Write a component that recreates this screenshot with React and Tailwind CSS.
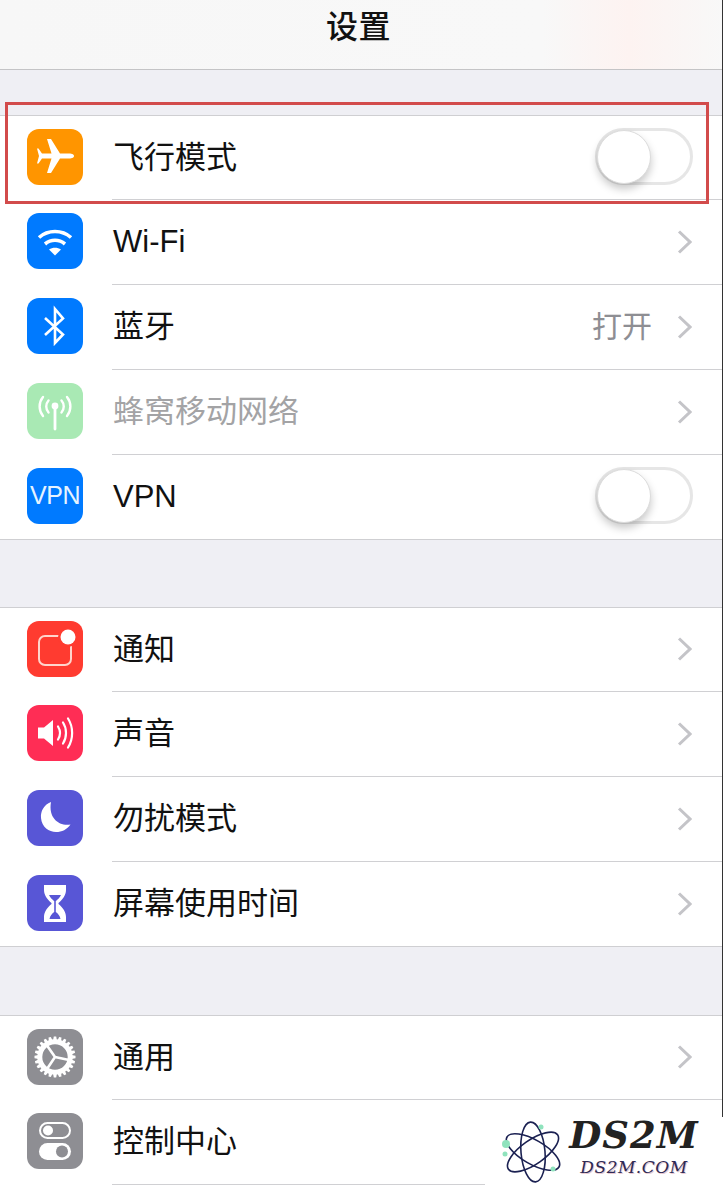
import React from 'react';

const PlaneIcon = () => (
  <svg viewBox="0 0 56 56" className="w-full h-full">
    <path fill="#fff" d="M47 27C47 25 44 24.5 41 24.5L33 24.5 24 10 20 10 24.5 24.5 15 24.5 11.5 19.5 10 19.5 12 27 10 34.5 11.5 34.5 15 29.5 24.5 29.5 20 44 24 44 33 29.5 41 29.5C44 29.5 47 29 47 27Z" />
  </svg>
);

const WifiIcon = () => (
  <svg viewBox="0 0 56 56" className="w-full h-full" fill="none" stroke="#fff" strokeWidth="3.6">
    <path d="M12 24.5C21 16.5 35 16.5 44 24.5" />
    <path d="M18 31C24 26 32 26 38 31" />
    <path fill="#fff" stroke="none" d="M22 36.5C25.5 34 30.5 34 34 36.5L28 42.5Z" />
  </svg>
);

const BluetoothIcon = () => (
  <svg viewBox="0 0 56 56" className="w-full h-full" fill="none" stroke="#fff" strokeWidth="2.6">
    <path d="M18 20L36 36.5 28 45V11L36 20.5 18 37" />
  </svg>
);

const CellularIcon = () => (
  <svg viewBox="0 0 56 56" className="w-full h-full" fill="none" stroke="#fff" strokeWidth="2.4" strokeLinecap="round">
    <circle cx="28" cy="23" r="3.4" fill="#fff" stroke="none" />
    <path d="M28 25V46" strokeWidth="2.8" />
    <path d="M21.5 17.5C18.5 21 18.5 26 21.5 29.5" />
    <path d="M34.5 17.5C37.5 21 37.5 26 34.5 29.5" />
    <path d="M16 14C11.5 19.5 11.5 27.5 16 33" />
    <path d="M40 14C44.5 19.5 44.5 27.5 40 33" />
  </svg>
);

const BellIcon = () => (
  <svg viewBox="0 0 56 56" className="w-full h-full" fill="none">
    <rect x="12" y="15" width="32" height="29" rx="6" stroke="#ffd5cc" strokeWidth="2" />
    <circle cx="41" cy="16" r="10" fill="#ff3b30" />
    <circle cx="41" cy="16" r="7.5" fill="#fff" />
  </svg>
);

const SoundIcon = () => (
  <svg viewBox="0 0 56 56" className="w-full h-full" fill="none" stroke="#fff" strokeWidth="2.2" strokeLinecap="round">
    <path fill="#fff" stroke="none" d="M11 22.5H17L26 15V41L17 33.5H11Z" />
    <path d="M31 21.5C33.5 25.5 33.5 30.5 31 34.5" />
    <path d="M36 17.5C40 23.5 40 32.5 36 38.5" />
    <path d="M41 13.5C46.5 22 46.5 34 41 42.5" />
  </svg>
);

const MoonIcon = () => (
  <svg viewBox="0 0 56 56" className="w-full h-full">
    <path fill="#fff" d="M24 12C16.5 15 13.5 21.5 14 28C14.8 37 22 42 29 42C35 42 40 39.5 43.5 34.5C33 36.5 21 29 24 12Z" />
  </svg>
);

const HourglassIcon = () => (
  <svg viewBox="0 0 56 56" className="w-full h-full">
    <path fill="#fff" d="M17 10H39V15C39 20.5 35.5 24.5 31.5 28V29C35.5 32.5 39 36.5 39 42V47H17V42C17 36.5 20.5 32.5 24.5 29V28C20.5 24.5 17 20.5 17 15Z" />
    <path fill="#5856d6" d="M22 20H34C33 22.5 30.5 24.5 29 26H27C25.5 24.5 23 22.5 22 20Z" />
    <path fill="#5856d6" d="M27.2 26H28.8V37C31 38.5 33 41 33.5 44H22.5C23 41 25 38.5 27.2 37Z" />
  </svg>
);

const teeth = Array.from({ length: 24 }, (_, i) => i * 15);

const GearIcon = () => (
  <svg viewBox="0 0 56 56" className="w-full h-full" fill="none" stroke="#fff">
    {teeth.map(a => (
      <path key={a} d="M25.8 13L26.8 7.5H29.2L30.2 13Z" fill="#fff" stroke="none" transform={`rotate(${a} 28 28)`} />
    ))}
    <circle cx="28" cy="28" r="15.2" strokeWidth="5" />
    <path d="M28 28L20 16.5M28 28L42 31M28 28L20 40" strokeWidth="2.6" />
  </svg>
);

const ControlsIcon = () => (
  <svg viewBox="0 0 56 56" className="w-full h-full" fill="none">
    <rect x="13" y="10" width="30" height="15" rx="7.5" stroke="#fff" strokeWidth="2" />
    <circle cx="21" cy="17.5" r="5" fill="#fff" />
    <rect x="12" y="30" width="32" height="17" rx="8.5" fill="#fff" />
    <circle cx="35" cy="38.5" r="6" fill="#8e8e93" />
  </svg>
);

const Chevron = () => (
  <svg viewBox="0 0 15 24" className="w-[15px] h-[24px] mb-px" fill="none" stroke="#c4c4c8" strokeWidth="3">
    <path d="M2 1.5L13 12 2 22.5" />
  </svg>
);

const Toggle = () => (
  <div className="relative w-[98px] h-[57px] mr-[-1px] mb-[3px] rounded-full border-[3px] border-[#e6e6e6] bg-white">
    <div className="absolute left-[-1px] top-0 w-[54px] h-[54px] -mt-px rounded-full bg-white border border-[#dcdcdc] shadow-[0_5px_8px_rgba(0,0,0,0.22)]" />
  </div>
);

const Row = ({ icon, bg, label, value, toggle, dim, last, first }) => (
  <div className={`flex items-center pl-[27px] ${first || last ? 'h-[84px]' : 'h-[85px]'}`}>
    <div className={`w-[56px] h-[56px] shrink-0 rounded-[12px] overflow-hidden flex items-center justify-center ${bg} ${last ? 'mb-[2px]' : 'mb-[3px]'}`}>
      {icon}
    </div>
    <div className={`ml-[29px] flex-1 h-full flex items-center justify-between pr-[31px] ${last ? '' : 'border-b border-[#d0d0d3]'}`}>
      <span className={`ml-px text-[31px] leading-none mb-px ${dim ? 'text-[#a3a3a5]' : 'text-[#111]'}`}>{label}</span>
      {toggle ? (
        <Toggle />
      ) : (
        <div className="flex items-center gap-[25px]">
          {value && <span className="text-[30px] leading-none mb-px text-[#8e8e93]">{value}</span>}
          <Chevron />
        </div>
      )}
    </div>
  </div>
);

const Group = ({ children, className }) => (
  <div className={`bg-white border-y border-[#cfcfd2] ${className}`}>{children}</div>
);

export default function App() {
  return (
    <div
      className="relative w-[723px] h-[1185px] overflow-hidden bg-[#efeff4]"
      style={{ fontFamily: '"Liberation Sans", "Noto Sans CJK SC", sans-serif' }}
    >
      <div className="h-[70px] flex items-center justify-center bg-[linear-gradient(90deg,#f7f7f7_0%,#f8f8f8_75%,#fdf3f1_87%,#f8f8f8_100%)] border-b border-[#c4c4c6]">
        <h1 className="text-[32px] tracking-[0.5px] leading-none font-medium text-[#111] mb-[16px] mr-[6px]">设置</h1>
      </div>

      <Group className="mt-[45px]">
        <Row first bg="bg-[#ff9500]" icon={<PlaneIcon />} label="飞行模式" toggle />
        <Row bg="bg-[#007aff]" icon={<WifiIcon />} label="Wi-Fi" />
        <Row bg="bg-[#007aff]" icon={<BluetoothIcon />} label="蓝牙" value="打开" />
        <Row bg="bg-[#a9e9b4]" icon={<CellularIcon />} label="蜂窝移动网络" dim />
        <Row last bg="bg-[#007aff]" icon={<span className="text-[25px] text-[#e6f3ff] tracking-[-0.5px]">VPN</span>} label="VPN" toggle />
      </Group>

      <Group className="mt-[67px]">
        <Row first bg="bg-[#ff3b30]" icon={<BellIcon />} label="通知" />
        <Row bg="bg-[#ff2d55]" icon={<SoundIcon />} label="声音" />
        <Row bg="bg-[#5856d6]" icon={<MoonIcon />} label="勿扰模式" />
        <Row last bg="bg-[#5856d6]" icon={<HourglassIcon />} label="屏幕使用时间" />
      </Group>

      <Group className="mt-[68px]">
        <Row first bg="bg-[#8e8e93]" icon={<GearIcon />} label="通用" />
        <Row bg="bg-[#8e8e93]" icon={<ControlsIcon />} label="控制中心" />
      </Group>

      {/* red highlight over the first row */}
      <div className="absolute left-[5px] top-[102px] w-[704px] h-[102px] border-[3px] border-[#d24b4b]" />

      {/* right edge line of the source image */}
      <div className="absolute right-0 top-0 w-px h-[1117px] bg-[#333]" />

      {/* watermark */}
      <div className="absolute right-0 bottom-0 w-[238px] h-[68px] bg-white flex items-start">
        <svg viewBox="0 0 70 66" className="w-[70px] h-[66px] ml-[14px] mt-px shrink-0" fill="none">
          <g stroke="#1b2152" strokeWidth="1.6">
            <ellipse cx="34" cy="34" rx="30" ry="12" transform="rotate(30 34 34)" />
            <ellipse cx="34" cy="34" rx="30" ry="12" transform="rotate(-35 34 34)" />
            <ellipse cx="34" cy="34" rx="30" ry="12" transform="rotate(85 34 34)" />
          </g>
          <circle cx="7" cy="26" r="4" fill="#8fe3bd" />
          <circle cx="6" cy="36" r="2.5" fill="#8fe3bd" />
          <circle cx="42" cy="9" r="2.5" fill="#8fe3bd" />
          <circle cx="54" cy="51" r="2.5" fill="#8fe3bd" />
        </svg>
        <div className="ml-[-8px] w-[146px] flex flex-col items-center" style={{ fontFamily: '"DejaVu Serif", serif' }}>
          <span className="text-[37px] leading-[36px] font-bold italic text-[#222] tracking-[1px]">DS2M</span>
          <span className="text-[17px] leading-[18px] mt-[5px] italic text-[#2f2a55] tracking-[0.5px] [text-shadow:1px_1px_0_#e8c8d0]">DS2M.COM</span>
        </div>
      </div>
    </div>
  );
}
